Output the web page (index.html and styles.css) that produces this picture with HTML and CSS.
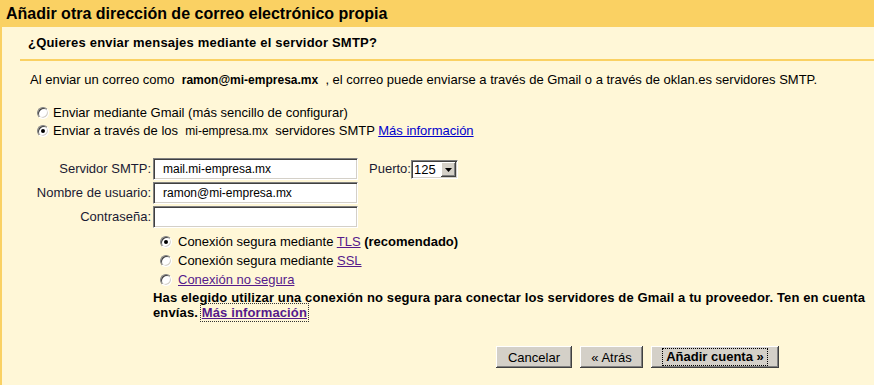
FILE: index.html
```html
<!DOCTYPE html>
<html lang="es">
<head>
<meta charset="utf-8">
<title>Añadir otra dirección de correo electrónico propia</title>
<link rel="stylesheet" href="styles.css">
</head>
<body>
<div class="header">Añadir otra dirección de correo electrónico propia</div>
<div class="main">
  <div class="subhead">¿Quieres enviar mensajes mediante el servidor SMTP?</div>
  <div class="content">
    <p class="intro">Al enviar un correo como&nbsp; <b class="val">ramon@mi-empresa.mx</b> &nbsp;, el correo puede enviarse a través de Gmail o a través de oklan.es servidores SMTP.</p>
    <div class="choices">
      <div class="opt"><span class="radio"></span><span>Enviar mediante Gmail (más sencillo de configurar)</span></div>
      <div class="opt"><span class="radio checked"></span><span>Enviar a través de los&nbsp; <span class="val">mi-empresa.mx</span> &nbsp;servidores SMTP <a class="link" href="#">Más información</a></span></div>
    </div>
    <div class="form">
      <label class="lbl">Servidor SMTP:</label>
      <input class="field" type="text" value="mail.mi-empresa.mx">
      <div class="port"><span class="plabel">Puerto:</span><span class="select"><span class="sel-val">125</span><span class="sel-btn"><svg width="7" height="4" viewBox="0 0 7 4"><path d="M0 0H7L3.5 4Z" fill="#000"/></svg></span></span></div>
      <label class="lbl">Nombre de usuario:</label>
      <input class="field" type="text" value="ramon@mi-empresa.mx">
      <div></div>
      <label class="lbl">Contraseña:</label>
      <input class="field" type="password" value="">
      <div></div>
    </div>
    <div class="secure">
      <div class="conn">
        <div class="opt2"><span class="radio checked"></span><span>Conexión segura mediante <a class="visited" href="#">TLS</a> <b>(recomendado)</b></span></div>
        <div class="opt2"><span class="radio"></span><span>Conexión segura mediante <a class="visited" href="#">SSL</a></span></div>
        <div class="opt2"><span class="radio"></span><span><a class="visited" href="#">Conexión no segura</a></span></div>
      </div>
      <div class="warn">
        <div class="wline">Has elegido utilizar una conexión no segura para conectar los servidores de Gmail a tu proveedor. Ten en cuenta</div>
        <div class="wline">envías. <a class="visited focus" href="#">Más información</a></div>
      </div>
    </div>
    <div class="buttons">
      <button class="btn b-cancel" type="button">Cancelar</button>
      <button class="btn b-back" type="button">« Atrás</button>
      <button class="btn primary" type="button"><span class="focusbox">Añadir cuenta »</span></button>
    </div>
  </div>
</div>
</body>
</html>
```

FILE: styles.css
```css
html, body {
  margin: 0;
  padding: 0;
}
body {
  width: 874px;
  height: 385px;
  overflow: hidden;
  background: #fff7d7;
  font-family: "Liberation Sans", Arial, sans-serif;
  font-size: 13px;
  color: #000;
}
.header {
  height: 27px;
  line-height: 27px;
  background: #fad163;
  padding-left: 6px;
  font-size: 16px;
  font-weight: bold;
  white-space: nowrap;
}
.main {
  border-left: 2px solid #fad163;
  height: 358px;
}
.subhead {
  margin-left: 18px;
  padding-left: 8px;
  height: 32px;
  line-height: 32px;
  border-bottom: 2px solid #fad163;
  font-weight: bold;
  letter-spacing: 0.2px;
  white-space: nowrap;
}
.content {
  padding-left: 28px;
}
.intro {
  margin: 11px 0 0;
  line-height: 16px;
  white-space: nowrap;
}
.val {
  font-size: 12px;
}
b.val {
  font-weight: bold;
}
.choices {
  margin-top: 16px;
  padding-left: 7px;
}
.opt, .opt2 {
  display: flex;
  align-items: center;
  height: 18px;
  line-height: 18px;
  white-space: nowrap;
}
.opt .radio {
  margin-right: 4px;
}
.radio {
  box-sizing: border-box;
  width: 12px;
  height: 12px;
  border-radius: 50%;
  background: #fff;
  border: 1px solid;
  border-color: #808080 #ffffff #ffffff #808080;
  box-shadow: inset 1px 1px 0 #404040, inset -1px -1px 0 #d4d0c8;
  position: relative;
  flex: none;
}
.radio.checked::after {
  content: "";
  position: absolute;
  left: 3px;
  top: 3px;
  width: 4px;
  height: 4px;
  border-radius: 50%;
  background: #000;
}
.link {
  color: #0000cc;
  text-decoration: underline;
}
.visited {
  color: #551a8b;
  text-decoration: underline;
}
.form {
  margin-top: 18px;
  display: grid;
  grid-template-columns: 121px 205px auto;
  grid-auto-rows: 22px;
  column-gap: 2px;
  row-gap: 2px;
  color: #1a1a33;
}
.lbl {
  text-align: right;
  line-height: 22px;
  white-space: nowrap;
}
.field {
  box-sizing: border-box;
  width: 205px;
  height: 22px;
  margin: 0;
  padding: 0 0 0 9px;
  font-family: "Liberation Sans", Arial, sans-serif;
  font-size: 12px;
  color: #000;
  background: #fff;
  border: 1px solid;
  border-color: #808080 #ffffff #ffffff #808080;
  box-shadow: inset 1px 1px 0 #404040, inset -1px -1px 0 #d4d0c8;
  outline: none;
}
.port {
  display: flex;
  align-items: flex-start;
  padding-left: 9px;
  white-space: nowrap;
}
.plabel {
  line-height: 22px;
}
.select {
  box-sizing: border-box;
  margin-top: 2px;
  width: 47px;
  height: 19px;
  display: flex;
  align-items: stretch;
  background: #fff;
  border: 1px solid;
  border-color: #808080 #ffffff #ffffff #808080;
  box-shadow: inset 1px 1px 0 #404040, inset -1px -1px 0 #d4d0c8;
  padding: 1px;
  color: #000;
}
.sel-val {
  flex: 1;
  line-height: 15px;
  padding-left: 1px;
}
.sel-btn {
  box-sizing: border-box;
  width: 15px;
  display: flex;
  align-items: center;
  justify-content: center;
  background: #d4d0c8;
  box-shadow: inset -1px -1px 0 #404040, inset 1px 1px 0 #ffffff, inset -2px -2px 0 #808080;
}
.secure {
  margin-top: 4px;
  padding-left: 123px;
}
.conn {
  padding-left: 7px;
}
.opt2 {
  height: 19px;
  line-height: 19px;
}
.opt2 .radio {
  margin-right: 6px;
}
.opt2 b {
  font-weight: bold;
}
.warn {
  margin-top: 1px;
  font-weight: bold;
  line-height: 15px;
  letter-spacing: 0.13px;
}
.wline {
  white-space: nowrap;
}
.focus {
  outline: 1px dotted #333;
  outline-offset: 1px;
}
.buttons {
  margin-top: 26px;
  padding-left: 466px;
  display: flex;
  gap: 8px;
}
.btn {
  box-sizing: border-box;
  height: 22px;
  margin: 0;
  padding: 0;
  display: flex;
  align-items: center;
  justify-content: center;
  font-family: "Liberation Sans", Arial, sans-serif;
  font-size: 13px;
  color: #000;
  background: #d4d0c8;
  border: none;
  box-shadow: inset -1px -1px 0 #404040, inset 1px 1px 0 #ffffff, inset -2px -2px 0 #808080;
  white-space: nowrap;
}
.b-cancel {
  width: 76px;
}
.b-back {
  width: 63px;
}
.btn.primary {
  font-weight: bold;
  width: 128px;
}
.focusbox {
  display: inline-block;
  outline: 1px dotted #000;
  padding: 1px 3px;
  line-height: 14px;
}
```
